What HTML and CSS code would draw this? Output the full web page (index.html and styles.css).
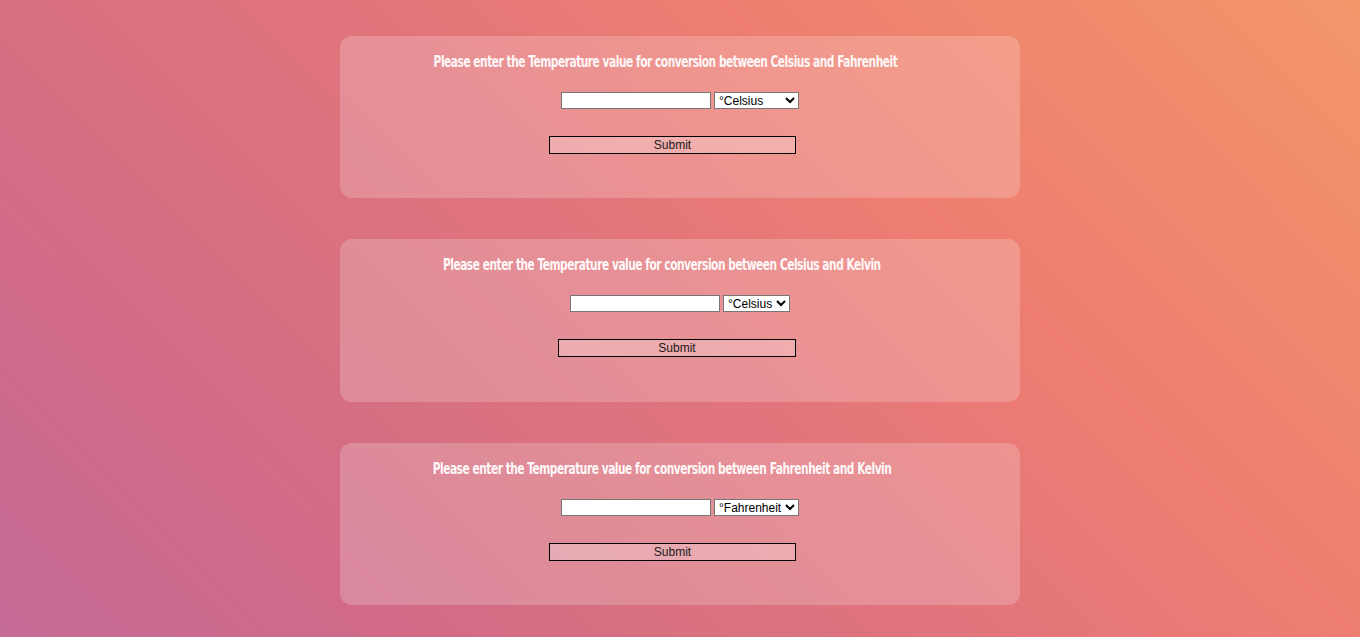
FILE: index.html
```html
<!DOCTYPE html>
<html>
<head>
<meta charset="utf-8">
<title>Temperature Converter</title>
<link rel="stylesheet" href="styles.css">
</head>
<body>
<main class="page">
  <section class="card">
    <h3 class="title title-cf">Please enter the Temperature value for conversion between Celsius and Fahrenheit</h3>
    <div class="row">
      <input class="field" type="text">
      <select class="unit unit-wide">
        <option>°Celsius</option>
        <option>°Fahrenheit</option>
      </select>
    </div>
    <button class="submit submit-wide">Submit</button>
  </section>
  <section class="card card-tall">
    <h3 class="title title-ck">Please enter the Temperature value for conversion between Celsius and Kelvin</h3>
    <div class="row">
      <input class="field" type="text">
      <select class="unit unit-narrow">
        <option>°Celsius</option>
        <option>°Kelvin</option>
      </select>
    </div>
    <button class="submit submit-narrow">Submit</button>
  </section>
  <section class="card">
    <h3 class="title title-fk">Please enter the Temperature value for conversion between Fahrenheit and Kelvin</h3>
    <div class="row">
      <input class="field" type="text">
      <select class="unit unit-wide">
        <option>°Fahrenheit</option>
        <option>°Kelvin</option>
      </select>
    </div>
    <button class="submit submit-wide">Submit</button>
  </section>
</main>
</body>
</html>
```
FILE: styles.css
```css
html, body {
  margin: 0;
  padding: 0;
  height: 100%;
}
body {
  background: linear-gradient(45deg, #c46b96 0%, #d06a8a 17%, #d77080 33%, #e2757c 50%, #ee7d71 67%, #f08a6c 85%, #f3976b 100%);
  font-family: "Liberation Sans", Arial, sans-serif;
  overflow: hidden;
}
.page {
  display: flex;
  flex-direction: column;
  align-items: center;
  gap: 41px;
  padding-top: 36px;
}
.card {
  width: 680px;
  box-sizing: border-box;
  background: rgba(255, 255, 255, 0.2);
  border-radius: 12px;
  padding: 16px 0 44px;
  display: flex;
  flex-direction: column;
  align-items: center;
}
.card-tall {
  padding-bottom: 45px;
}
.title {
  margin: 0;
  color: #fff8f8;
  font-family: "DejaVu Sans Condensed", "DejaVu Sans", sans-serif;
  font-weight: bold;
  font-size: 16px;
  line-height: 20px;
  letter-spacing: -0.6px;
  white-space: nowrap;
  transform: scaleX(0.735);
}
.title-cf { margin-right: 29px; }
.title-ck { margin-right: 37px; }
.title-fk { margin-right: 35px; }
.row {
  display: flex;
  gap: 3px;
  align-items: center;
  margin-top: 20px;
  height: 17px;
}
.field {
  width: 150px;
  height: 17px;
  box-sizing: border-box;
  border: 1px solid #767676;
  background: #ffffff;
  margin: 0;
  padding: 0 2px;
}
.unit {
  height: 17px;
  box-sizing: border-box;
  border: 1px solid #767676;
  border-radius: 0;
  background: #ffffff;
  font-family: "Liberation Sans", Arial, sans-serif;
  font-size: 12px;
  line-height: 14px;
  color: #000;
  margin: 0;
  padding: 0;
}
.unit-wide { width: 85px; }
.unit-narrow { width: 67px; }
.submit {
  margin-top: 27px;
  height: 18px;
  box-sizing: border-box;
  border: 1px solid #000;
  background: rgba(255, 255, 255, 0.25);
  font-family: "Liberation Sans", Arial, sans-serif;
  font-size: 12px;
  color: #1a1a1a;
  padding: 0;
  line-height: 14px;
}
.submit-wide {
  width: 247px;
  margin-right: 15px;
}
.submit-narrow {
  width: 238px;
  margin-right: 6px;
}
```
